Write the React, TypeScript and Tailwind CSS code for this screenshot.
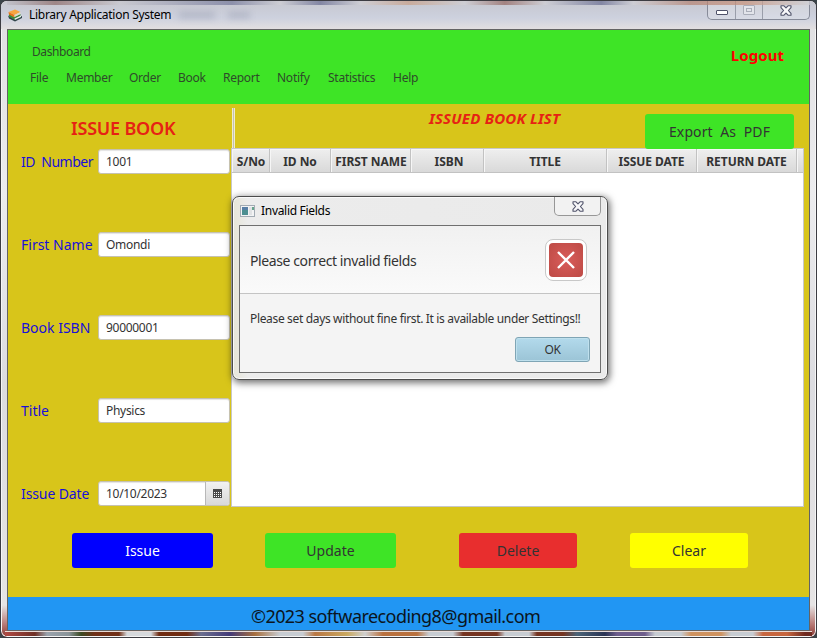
import type { ReactNode } from "react";

const menuItems = [
  { label: "File", style: "w-[36px]" },
  { label: "Member", style: "w-[63px]" },
  { label: "Order", style: "w-[49px]" },
  { label: "Book", style: "w-[45px]" },
  { label: "Report", style: "w-[54px]" },
  { label: "Notify", style: "w-[51px]" },
  { label: "Statistics", style: "w-[65px]" },
  { label: "Help", style: "w-[40px]" },
];

const columns = [
  { label: "S/No", style: "w-[38px] pl-px" },
  { label: "ID No", style: "w-[61px]" },
  { label: "FIRST NAME", style: "w-[80px] pl-px" },
  { label: "ISBN", style: "w-[73px] pl-[4px]" },
  { label: "TITLE", style: "w-[123px]" },
  { label: "ISSUE DATE", style: "w-[90px]" },
  { label: "RETURN DATE", style: "w-[100px]" },
  { label: "", style: "w-[6px]" },
];

const fields = [
  { label: "ID  Number", value: "1001", tracking: "tracking-[-0.5px]" },
  { label: "First Name", value: "Omondi", tracking: "tracking-normal" },
  { label: "Book ISBN", value: "90000001", tracking: "tracking-normal" },
  { label: "Title", value: "Physics", tracking: "tracking-normal" },
  { label: "Issue Date", value: "10/10/2023", date: true, tracking: "tracking-[-0.1px]" },
];

function BooksIcon() {
  return (
    <svg width="14" height="13" viewBox="0 0 14 13">
      <path d="M0 6.5 L6 10 L14 7 V9 L7 12.6 L1 9.5Z" fill="#31444a" />
      <path d="M1 4.5 L6 8 L12.5 5 V7.5 L6 10.5 L1 7.5Z" fill="#3c8a3c" />
      <path d="M6.5 9.4 L13 6.5 V8 L6.8 11Z" fill="#e9eee9" />
      <path d="M0.5 3 L7 0.5 L12.5 3 L6.5 6Z" fill="#f8a53f" />
      <path d="M0.5 3 L6.5 6 V8.6 L1 5.5Z" fill="#ea7414" />
      <path d="M6.5 6 L12.5 3 V5 L6.5 8Z" fill="#ddd8c8" />
    </svg>
  );
}

function CloseGlyph() {
  return (
    <svg width="12" height="11" viewBox="0 0 12 11">
      <path
        d="M1 .8H4L6 2.8L8 .8H11V2.6L8.4 5.5L11 8.4V10.2H8L6 8.2L4 10.2H1V8.4L3.6 5.5L1 2.6Z"
        fill="#f7f7f9"
        stroke="#50536a"
        strokeWidth="1.1"
        strokeLinejoin="round"
      />
    </svg>
  );
}

function CalendarGlyph() {
  return (
    <svg width="9" height="9" viewBox="0 0 9 9" shapeRendering="crispEdges">
      <path d="M0 0H9V9H0Z" fill="#4a4a4a" />
      {[3, 5, 7].map((y) =>
        [1, 3, 5, 7].map((x) => <rect key={`${x}-${y}`} x={x} y={y} width="1" height="1" fill="#fff" />),
      )}
    </svg>
  );
}

function TitleBar() {
  return (
    <div className="flex h-[28px] items-start pl-[7px]">
      <div className="flex h-[28px] items-center gap-[7px]">
        <BooksIcon />
        <span className="text-[12px] tracking-[-0.28px] text-black">Library Application System</span>
        <span className="ml-[1px] h-[8px] w-[36px] bg-[#8f94a8]/35 blur-[3px]" />
        <span className="ml-[6px] h-[8px] w-[22px] bg-[#8f94a8]/35 blur-[3px]" />
      </div>
      <div className="ml-auto mr-[6px] flex h-[19px] w-[103px] rounded-b-[5px] border border-t-0 border-[#878b99] bg-white/20">
        <div className="flex w-[28px] items-center justify-center border-r border-[#9a9eaa]">
          <div className="mt-[5px] h-[5px] w-[12px] rounded-[1px] border border-[#50536a] bg-white" />
        </div>
        <div className="flex w-[27px] items-center justify-center border-r border-[#9a9eaa]">
          <div className="flex h-[10px] w-[12px] items-center justify-center rounded-[1px] border border-[#a9adb8] bg-[#e2e4ea]">
            <div className="h-[4px] w-[6px] border border-[#a9adb8]" />
          </div>
        </div>
        <div className="flex flex-1 items-center justify-center">
          <CloseGlyph />
        </div>
      </div>
    </div>
  );
}

function ActionButton({ className, children }: { className: string; children: ReactNode }) {
  return (
    <button className={`flex h-[35px] items-center justify-center rounded-[3px] text-[14px] ${className}`}>
      {children}
    </button>
  );
}

function IssueForm() {
  return (
    <div className="w-[223px] pl-[13px]">
      <h2 className="flex h-[45px] items-center pl-[50px] pt-[4px] text-[18px] font-semibold tracking-[-0.2px] text-[#e62214]">
        ISSUE BOOK
      </h2>
      <div className="flex flex-col gap-[58px]">
        {fields.map((f) => (
          <label key={f.label} className="flex h-[25px] items-center">
            <span className={`w-[77px] whitespace-pre text-[14px] text-[#1810d8] ${f.tracking}`}>{f.label}</span>
            <span className="flex h-[25px] w-[132px] items-center overflow-hidden rounded-[3px] border border-[#c6c2b0] bg-white shadow-[inset_0_1px_1px_#e4e4e4]">
              <span className="flex-1 pl-[7px] text-[12px] tracking-[-0.3px] text-[#333]">{f.value}</span>
              {f.date && (
                <span className="flex h-full w-[24px] items-center justify-center border-l border-[#b8b8b8] bg-linear-to-b from-[#f2f2f2] to-[#d8d8d8]">
                  <CalendarGlyph />
                </span>
              )}
            </span>
          </label>
        ))}
      </div>
    </div>
  );
}

function BookTable() {
  return (
    <div className="flex w-[573px] flex-col">
      <div className="flex h-[44px] pl-[1px]">
        <div className="mt-[4px] h-[40px] w-[3px] border-x border-[#eeebd0] bg-[#c4c1ac]" />
        <h2 className="h-[30px] w-[410px] whitespace-nowrap pl-[194px] text-[15px] font-bold italic leading-[29px] tracking-[0.2px] text-[#e62214]">
          ISSUED BOOK LIST
        </h2>
        <ActionButton className="z-10 mt-[10px] w-[149px] shrink-0 whitespace-pre bg-[#3ee426] tracking-[0.12px] text-[#333]">
          {"Export  As  PDF"}
        </ActionButton>
      </div>
      <div className="h-[359px] border border-[#c8c8c8] bg-white">
        <div className="flex h-[24px] border-b border-[#c2c2c2] bg-linear-to-b from-[#efefef] to-[#d9d9d9]">
          {columns.map((c) => (
            <div
              key={c.label}
              className={`flex shrink-0 items-center justify-center whitespace-nowrap border-r border-[#c2c2c2] pt-[2px] text-[12px] font-bold tracking-[-0.05px] text-[#333] shadow-[inset_1px_1px_0_#f6f6f6] last:border-r-0 ${c.style}`}
            >
              {c.label}
            </div>
          ))}
        </div>
      </div>
    </div>
  );
}

function ErrorDialog() {
  return (
    <div className="absolute left-[232px] top-[196px] flex h-[184px] w-[376px] flex-col rounded-[7px] border border-[#4c4c4c] bg-linear-to-r from-[#e6e5d8] via-[#ececec] via-4% to-[#eaeaea] px-[5px] pb-[5px] shadow-[1px_2px_7px_1px_rgba(0,0,0,0.55),inset_0_0_0_1px_#fafafa]">
      <div className="flex h-[28px] pl-[2px]">
        <div className="flex h-[28px] items-center gap-[6px]">
          <svg width="15" height="12" viewBox="0 0 15 12">
            <rect x=".5" y=".5" width="14" height="11" fill="#f2f3f4" stroke="#a2abb3" />
            <rect x="2" y="2" width="6" height="8" fill="#4d8f91" />
            <rect x="2" y="2" width="6" height="3" fill="#587fa5" />
            <rect x="9" y="2" width="3" height="8" fill="#e0e2e4" />
            <rect x="12" y="2" width="2" height="3" fill="#67a48c" />
          </svg>
          <span className="text-[12px] tracking-[-0.3px] text-black">Invalid Fields</span>
        </div>
        <div className="ml-auto mr-[1px] flex h-[19px] w-[47px] items-center justify-center rounded-b-[5px] border border-t-0 border-[#979797] bg-[#f2f2f2]">
          <CloseGlyph />
        </div>
      </div>
      <div className="ml-px flex h-[148px] w-[362px] flex-col border border-[#6f6f6f] bg-[#f4f4f4]">
        <div className="flex h-[68px] shrink-0 items-center justify-between border-b border-[#c4c4c4] bg-linear-to-b from-[#f1f1f1] to-[#fafafa] pl-[10px] pr-[13px] pt-px">
          <span className="text-[14px] tracking-[-0.4px] text-[#333]">Please correct invalid fields</span>
          <span className="flex size-[42px] items-center justify-center rounded-[8px] border border-[#c8c8c8] bg-white">
            <span className="flex size-[34px] items-center justify-center rounded-[4px] bg-radial from-[#d95d5a] to-[#bd4a45]">
              <svg width="18" height="18" viewBox="0 0 18 18">
                <path d="M1 1L17 17M17 1L1 17" stroke="#fff" strokeWidth="2.4" />
              </svg>
            </span>
          </span>
        </div>
        <p className="h-[43px] whitespace-nowrap pl-[10px] pt-[16px] text-[12px] leading-[17px] tracking-[-0.34px] text-[#333]">
          Please set days without fine first. It is available under Settings!!
        </p>
        <button className="ml-[275px] flex h-[25px] w-[75px] items-center justify-center rounded-[3px] border border-[#7fa5b5] bg-linear-to-b from-[#b3daec] to-[#9bc4d6] text-[12px] tracking-[-0.4px] text-[#333] shadow-[inset_0_0_0_1px_#bfe0ed]">
          OK
        </button>
      </div>
    </div>
  );
}

export default function App() {
  return (
    <div className="relative h-[638px] w-[817px] overflow-hidden bg-[#3a4348] font-['Noto_Sans','Open_Sans',sans-serif]">
      <div className="flex h-full flex-col overflow-hidden rounded-[7px] border border-[#3c3c42] bg-[linear-gradient(180deg,#dfdfe1_0%,#ececee_30%,#dcdce0_60%,#e6e4e4_95%,#b87a76_98%,#8a3a34_100%)] shadow-[inset_0_0_0_1px_#f5f5f5]">
        <div className="bg-linear-to-b from-[#c6c7cf] via-[#cdd1de] via-60% to-[#e2dfe0]">
          <div className="-mb-[4px] mx-[6px] h-[4px] bg-[linear-gradient(90deg,#bcbcc4_0%,#8d6a68_6%,#c9c9cf_14%,#74789a_28%,#cfcfd4_34%,#666a90_39%,#d0d0d5_44%,#c99f86_50%,#d0d0d5_57%,#93655f_62%,#d0d0d5_67%,#666a90_74%,#d0d0d5_78%,#b58373_85%,#c58f78_92%,#d0d0d5_100%)] opacity-70" />
          <TitleBar />
        </div>
        <div className="ml-[6px] flex h-[602px] w-[803px] shrink-0 flex-col border border-[#636363]">
          <header className="h-[74px] shrink-0 bg-[#3ee426] text-[12px] text-[#2e4b2a]">
            <div className="flex h-[35px] items-start justify-between pl-[24px] pr-[25px]">
              <span className="pt-[13px] tracking-[-0.4px]">Dashboard</span>
              <span className="pt-[14px] text-[15px] font-bold tracking-[0.05px] text-[#ff0000]">Logout</span>
            </div>
            <nav className="flex h-[26px] items-center pl-[22px]">
              {menuItems.map((m) => (
                <span key={m.label} className={`shrink-0 tracking-[-0.25px] ${m.style}`}>
                  {m.label}
                </span>
              ))}
            </nav>
          </header>
          <main className="h-[493px] shrink-0 bg-[#d8c51a]">
            <div className="flex h-[403px]">
              <IssueForm />
              <BookTable />
            </div>
            <div className="flex pl-[64px] pt-[26px]">
              <ActionButton className="mr-[52px] w-[141px] bg-[#0000ff] text-white">Issue</ActionButton>
              <ActionButton className="mr-[63px] w-[131px] bg-[#3ee426] text-[#333]">Update</ActionButton>
              <ActionButton className="mr-[53px] w-[118px] bg-[#e82e2e] text-[#333]">Delete</ActionButton>
              <ActionButton className="w-[118px] bg-[#ffff00] text-[#333]">Clear</ActionButton>
            </div>
          </main>
          <footer className="flex h-[33px] shrink-0 items-center bg-[#2196f3] pl-[243px] pt-[6px] text-[18px] tracking-[-0.57px] text-[#0b1420]">
            ©2023 softwarecoding8@gmail.com
          </footer>
        </div>
        <div className="mx-[4px] h-[5px] border-t border-[#e8dcd8] bg-[linear-gradient(90deg,#b04a44_0px,#6e3026_30px,#9aa3ad_42px,#8a9499_64px,#3b4a22_76px,#713018_90px,#713018_114px,#d6d9dc_122px,#d6d9dc_146px,#702c12_154px,#702c12_182px,#6b6f90_196px,#433a78_225px,#a8703f_250px,#c7ccd2_275px,#c7ccd2_298px,#b97744_310px,#c9a860_342px,#cfd0d0_360px,#b9713f_378px,#b9713f_412px,#c7ccd2_424px,#c7ccd2_448px,#753421_458px,#753421_492px,#c7ccd2_500px,#c7ccd2_524px,#753421_532px,#753421_558px,#4b6478_572px,#2a3454_600px,#6e5d8c_612px,#6e5d8c_640px,#c7ccd2_650px,#c7ccd2_676px,#cf9360_686px,#cf9360_716px,#c7ccd2_726px,#c7ccd2_748px,#c7663f_758px,#c7663f_782px,#6f2a20_800px)]" />
      </div>
      <ErrorDialog />
    </div>
  );
}
